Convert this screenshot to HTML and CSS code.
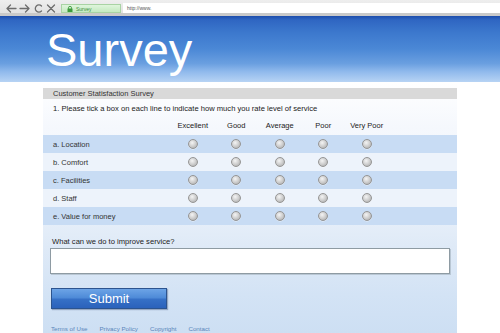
FILE: index.html
```html
<!DOCTYPE html>
<html>
<head>
<meta charset="utf-8">
<title>Survey</title>
<link rel="stylesheet" href="styles.css">
</head>
<body>
<div class="browser">
  <svg class="nav" width="58" height="14" viewBox="0 0 58 14">
    <g fill="none" stroke="#6d6d6d" stroke-width="1.3" stroke-linecap="round" stroke-linejoin="round">
      <path d="M7 7.5H16M7 7.5L10.5 4M7 7.5L10.5 11"/>
      <path d="M20 7.5H29M29 7.5L25.5 4M29 7.5L25.5 11"/>
      <path d="M41.5 5A3.6 3.6 0 1 0 41.5 10"/>
      <path d="M47.5 4L54.5 11M54.5 4L47.5 11"/>
    </g>
  </svg>
  <div class="tab">
    <svg width="6" height="6" viewBox="0 0 6 6"><rect x="0.5" y="2.5" width="5" height="3.5" fill="#3c9a3c"/><path d="M1.5 2.8V1.8A1.5 1.5 0 0 1 4.5 1.8V2.8" fill="none" stroke="#3c9a3c" stroke-width="0.9"/></svg>
    <span>Survey</span>
  </div>
  <div class="address">http://www.</div>
</div>
<header class="hero"><h1>Survey</h1></header>
<main class="page">
  <section class="panel">
    <div class="title-bar">Customer Statisfaction Survey</div>
    <p class="question">1. Please tick a box on each line to indicate how much you rate level of service</p>
    <div class="scale">
      <div class="row head"><span></span><span>Excellent</span><span>Good</span><span>Average</span><span>Poor</span><span>Very Poor</span></div>
      <div class="row band"><span class="label">a. Location</span><i class="radio"></i><i class="radio"></i><i class="radio"></i><i class="radio"></i><i class="radio"></i></div>
      <div class="row"><span class="label">b. Comfort</span><i class="radio"></i><i class="radio"></i><i class="radio"></i><i class="radio"></i><i class="radio"></i></div>
      <div class="row band"><span class="label">c. Facilities</span><i class="radio"></i><i class="radio"></i><i class="radio"></i><i class="radio"></i><i class="radio"></i></div>
      <div class="row"><span class="label">d. Staff</span><i class="radio"></i><i class="radio"></i><i class="radio"></i><i class="radio"></i><i class="radio"></i></div>
      <div class="row band"><span class="label">e. Value for money</span><i class="radio"></i><i class="radio"></i><i class="radio"></i><i class="radio"></i><i class="radio"></i></div>
    </div>
    <div class="improve">What can we do to improve service?</div>
    <div class="textbox"></div>
    <div class="submit">Submit</div>
    <nav class="footer"><a>Terms of Use</a><a>Privacy Policy</a><a>Copyright</a><a>Contact</a></nav>
  </section>
</main>
</body>
</html>
```
FILE: styles.css
```css
html, body {
  margin: 0;
  padding: 0;
  width: 500px;
  height: 333px;
  overflow: hidden;
  background: #ffffff;
  font-family: "Liberation Sans", Arial, sans-serif;
  color: #222;
}

.browser {
  height: 13px;
  display: flex;
  align-items: flex-start;
  background: linear-gradient(#eeeeee, #e2e2e2);
  border-bottom: 3px solid #c9c9c9;
}
.nav {
  display: block;
  margin-top: 1px;
  margin-right: 3px;
}
.tab {
  margin-top: 4px;
  width: 60px;
  height: 9px;
  display: flex;
  align-items: center;
  gap: 3px;
  padding-left: 5px;
  box-sizing: border-box;
  background: linear-gradient(#dff5dc, #c4e9c0);
  border: 1px solid #a9d3a4;
  font-size: 5px;
  color: #3f8f3f;
}
.tab svg { display: block; }
.address {
  flex: 1;
  margin-top: 3px;
  margin-left: 2px;
  height: 10px;
  background: #ffffff;
  font-size: 5px;
  line-height: 10px;
  padding-left: 4px;
  color: #555;
}

.hero {
  height: 66px;
  background: linear-gradient(#1c4cab 0%, #2f66c2 6%, #3c78cd 25%, #4b88d6 50%, #6a9fe0 72%, #8fb9ec 84%, #b7d3f4 100%);
}
.hero h1 {
  margin: 0;
  padding: 10px 0 0 46px;
  font-weight: normal;
  font-size: 47px;
  line-height: 47px;
  color: #ffffff;
}

.page {
  padding: 0 43px;
}
.panel {
  height: 251px;
  padding-top: 6px;
  box-sizing: border-box;
  background: linear-gradient(#ffffff 0%, #f5f8fd 18%, #edf3fb 45%, #dfeaf7 65%, #d3e3f5 85%, #cddff3 100%);
}
.title-bar {
  height: 11px;
  line-height: 11px;
  font-size: 7.5px;
  padding-left: 10px;
  background: #d9d9d9;
  color: #333;
}
.question {
  margin: 5px 0 0 0;
  padding-left: 10px;
  font-size: 7.6px;
  line-height: 10px;
  color: #222;
}
.scale {
  margin-top: 7px;
}
.row {
  display: grid;
  grid-template-columns: 128px repeat(5, 43.5px) 1fr;
  align-items: center;
  justify-items: center;
  height: 18px;
}
.row.head {
  height: 10px;
  font-size: 7.5px;
  line-height: 10px;
  margin-bottom: 4px;
  color: #222;
}
.row.band {
  background: #c8dcf4;
}
.row:not(.head):not(.band) {
  background: #edf3fb;
}
.label {
  justify-self: start;
  padding-left: 10px;
  font-size: 7.5px;
  color: #333;
}
.radio {
  display: block;
  width: 10px;
  height: 10px;
  box-sizing: border-box;
  border-radius: 50%;
  border: 1px solid #959595;
  background: radial-gradient(circle at 40% 35%, #f4f4f4 0%, #d2d2d2 45%, #a6a6a6 100%);
  box-shadow: 0 0.5px 0 rgba(255,255,255,0.8);
}
.improve {
  margin-top: 12px;
  padding-left: 9px;
  font-size: 7.6px;
  line-height: 10px;
  color: #222;
}
.textbox {
  margin: 1px 0 0 7px;
  width: 400px;
  height: 26px;
  box-sizing: border-box;
  background: #ffffff;
  border: 1px solid #8e9ba3;
  box-shadow: 1px 1px 0 #b9c7d4;
}
.submit {
  margin: 14px 0 0 8px;
  width: 116px;
  height: 21px;
  box-sizing: border-box;
  border: 1px solid #2c548f;
  background: linear-gradient(#6da4e6 0%, #4f8bd8 45%, #3670c6 55%, #2b62bb 100%);
  color: #ffffff;
  font-size: 13px;
  line-height: 19px;
  text-align: center;
  box-shadow: 1px 1px 1px rgba(40,60,100,0.35);
}
.footer {
  margin-top: 16px;
  padding-left: 8px;
  display: flex;
  gap: 12px;
  font-size: 6.2px;
  line-height: 8px;
}
.footer a {
  color: #5a86bb;
}
```
